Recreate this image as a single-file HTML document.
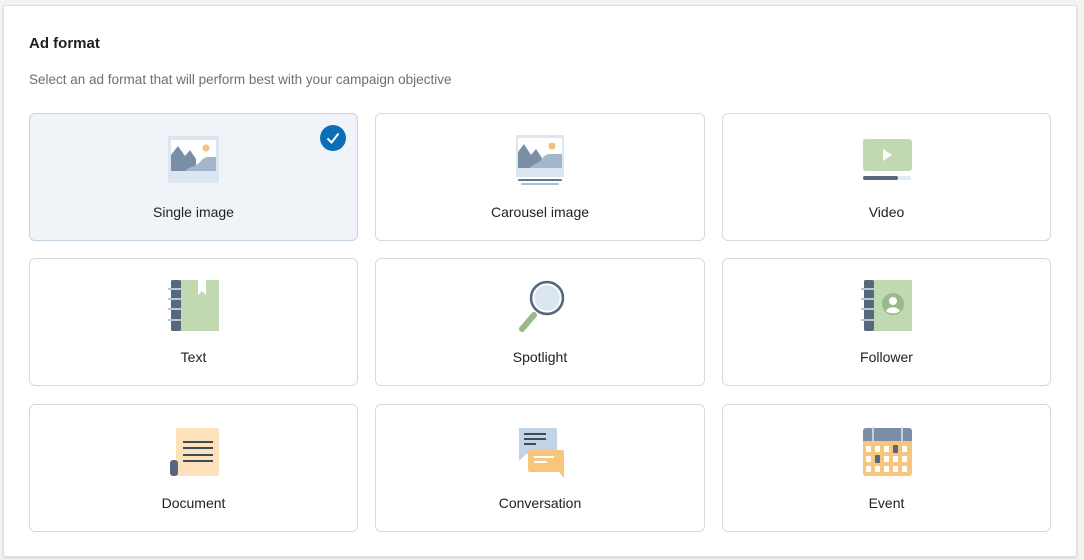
<!DOCTYPE html>
<html><head><meta charset="utf-8"><style>
*{box-sizing:border-box;margin:0;padding:0}
body{width:1084px;height:560px;background:#f3f3f3;font-family:"Liberation Sans",sans-serif;position:relative;overflow:hidden}
.panel{position:absolute;left:3px;top:5px;width:1074px;height:552px;background:#fff;border:1px solid #e0e0e0;border-radius:2px;box-shadow:0 1px 2px rgba(0,0,0,.15)}
h1{position:absolute;left:29px;top:35px;font-size:15px;font-weight:bold;color:#1f1f1f}
.sub{position:absolute;left:29px;top:72px;font-size:13.5px;color:#6f6f6f}
.card{position:absolute;height:128px;border:1px solid #d9d9d9;border-radius:6px;background:#fff}
.card.sel{background:#f0f4f8;border-color:#c5d3e0}
.card svg{position:absolute;left:50%;top:21px;margin-left:-26px}
.lbl{position:absolute;left:0;right:0;top:90px;text-align:center;font-size:14px;color:#222}
.chk{position:absolute;right:11px;top:11px;width:26px;height:26px;border-radius:50%;background:#0a6fb8}
</style></head><body>
<div class="panel"></div>
<h1>Ad format</h1>
<div class="sub">Select an ad format that will perform best with your campaign objective</div>

<div class="card sel" style="left:29px;top:113px;width:329px">
<svg width="52" height="50" viewBox="0 0 52 50"><rect x="0" y="1" width="51" height="47" fill="#dce6f0"/><rect x="3" y="5" width="45" height="31" fill="#fff"/><circle cx="38" cy="13" r="3.5" fill="#f6c27a"/><path d="M3 36V20l7-9 7 10 5-6 6 9 0 12z" fill="#7a8fa6"/><path d="M17 36c5-5 10-4 14-8s5-6 10-6h7v14z" fill="#a3b6cb"/></svg>
<div class="chk"><svg width="26" height="26" viewBox="0 0 26 26" style="position:static;margin:0"><path d="M7.5 13.5l4 4 7-9" stroke="#fff" stroke-width="2" fill="none"/></svg></div>
<div class="lbl">Single image</div></div>

<div class="card" style="left:375px;top:113px;width:330px">
<svg width="52" height="50" viewBox="0 0 52 50"><rect x="2" y="0" width="48" height="42" fill="#dce6f0"/><rect x="4" y="3" width="44" height="30" fill="#fff"/><circle cx="38" cy="11" r="3.5" fill="#f6c27a"/><path d="M4 33V17l6-8 7 11 5-6 6 9v10z" fill="#7a8fa6"/><path d="M15 33c5-5 9-4 12-8s5-6 9-6h12v14z" fill="#a3b6cb"/><rect x="4" y="44" width="44" height="2" rx="1" fill="#5f7891"/><rect x="7" y="48" width="38" height="2" rx="1" fill="#a9bfd4"/></svg>
<div class="lbl">Carousel image</div></div>

<div class="card" style="left:722px;top:113px;width:329px">
<svg width="52" height="50" viewBox="0 0 52 50"><rect x="2" y="4" width="49" height="32" rx="3" fill="#c0d9b1"/><path d="M22 14v12l9-6z" fill="#fff"/><rect x="2" y="41" width="48" height="4" rx="2" fill="#e2eaf2"/><rect x="2" y="41" width="35" height="4" rx="2" fill="#56687b"/></svg>
<div class="lbl">Video</div></div>

<div class="card" style="left:29px;top:258px;width:329px">
<svg width="52" height="52" viewBox="0 0 52 52"><rect x="3" y="0" width="48" height="51" fill="#c0d9b1"/><rect x="3" y="0" width="10" height="51" rx="2" fill="#56687b"/><path d="M30 0h8v15l-4-4-4 4z" fill="#fff"/><g stroke="#b5c8da" stroke-width="2"><path d="M0 9h13M0 19h13M0 29h13M0 40h13"/></g></svg>
<div class="lbl">Text</div></div>

<div class="card" style="left:375px;top:258px;width:330px">
<svg width="52" height="52" viewBox="0 0 52 52"><path d="M20 35L8 49" stroke="#9ab98a" stroke-width="6" stroke-linecap="round"/><circle cx="33" cy="18" r="16" fill="#dce6f0" stroke="#56687b" stroke-width="2.5"/><circle cx="33" cy="18" r="13.5" fill="none" stroke="#fff" stroke-width="1.5"/></svg>
<div class="lbl">Spotlight</div></div>

<div class="card" style="left:722px;top:258px;width:329px">
<svg width="52" height="52" viewBox="0 0 52 52"><rect x="3" y="0" width="48" height="51" fill="#c0d9b1"/><rect x="3" y="0" width="10" height="51" rx="2" fill="#56687b"/><g stroke="#b5c8da" stroke-width="2"><path d="M0 9h13M0 19h13M0 29h13M0 40h13"/></g><circle cx="32" cy="24" r="11" fill="#9ab98a"/><circle cx="32" cy="21" r="4" fill="#fff"/><path d="M25 31c3-5 11-5 14 0c-3 3-11 3-14 0z" fill="#fff"/></svg>
<div class="lbl">Follower</div></div>

<div class="card" style="left:29px;top:404px;width:329px">
<svg width="52" height="52" viewBox="0 0 52 52"><rect x="8" y="2" width="43" height="48" rx="2" fill="#fde1bb"/><rect x="2" y="34" width="8" height="16" rx="3" fill="#56687b"/><g stroke="#3d4a58" stroke-width="2"><path d="M15 16h30M15 22h30M15 29h30M15 35h30"/></g></svg>
<div class="lbl">Document</div></div>

<div class="card" style="left:375px;top:404px;width:330px">
<svg width="52" height="52" viewBox="0 0 52 52"><path d="M5 2h36a2 2 0 012 2v22a2 2 0 01-2 2H12l-7 7z" fill="#c1d3e5"/><g stroke="#3d4a58" stroke-width="2"><path d="M10 8h22M10 13h22M10 18h12"/></g><path d="M16 24h32a2 2 0 012 2v26l-5-6H16a2 2 0 01-2-2V26a2 2 0 012-2z" fill="#f8c57c"/><g stroke="#fff" stroke-width="2"><path d="M20 31h20M20 36h13"/></g></svg>
<div class="lbl">Conversation</div></div>

<div class="card" style="left:722px;top:404px;width:329px">
<svg width="52" height="52" viewBox="0 0 52 52"><rect x="2" y="2" width="49" height="48" rx="3" fill="#f8c57c"/><path d="M2 5a3 3 0 013-3h43a3 3 0 013 3v10H2z" fill="#7a8fa6"/><path d="M12 0v15M41 0v15" stroke="#dce6f0" stroke-width="1.5"/><g fill="#fff"><rect x="5" y="20" width="5" height="6"/><rect x="14" y="20" width="5" height="6"/><rect x="23" y="20" width="5" height="6"/><rect x="41" y="20" width="5" height="6"/><rect x="5" y="30" width="5" height="6"/><rect x="23" y="30" width="5" height="6"/><rect x="32" y="30" width="5" height="6"/><rect x="41" y="30" width="5" height="6"/><rect x="5" y="40" width="5" height="6"/><rect x="14" y="40" width="5" height="6"/><rect x="23" y="40" width="5" height="6"/><rect x="32" y="40" width="5" height="6"/><rect x="41" y="40" width="5" height="6"/></g><rect x="32" y="19" width="5" height="8" rx="1" fill="#56687b"/><rect x="14" y="29" width="5" height="8" rx="1" fill="#56687b"/></svg>
<div class="lbl">Event</div></div>
</body></html>
